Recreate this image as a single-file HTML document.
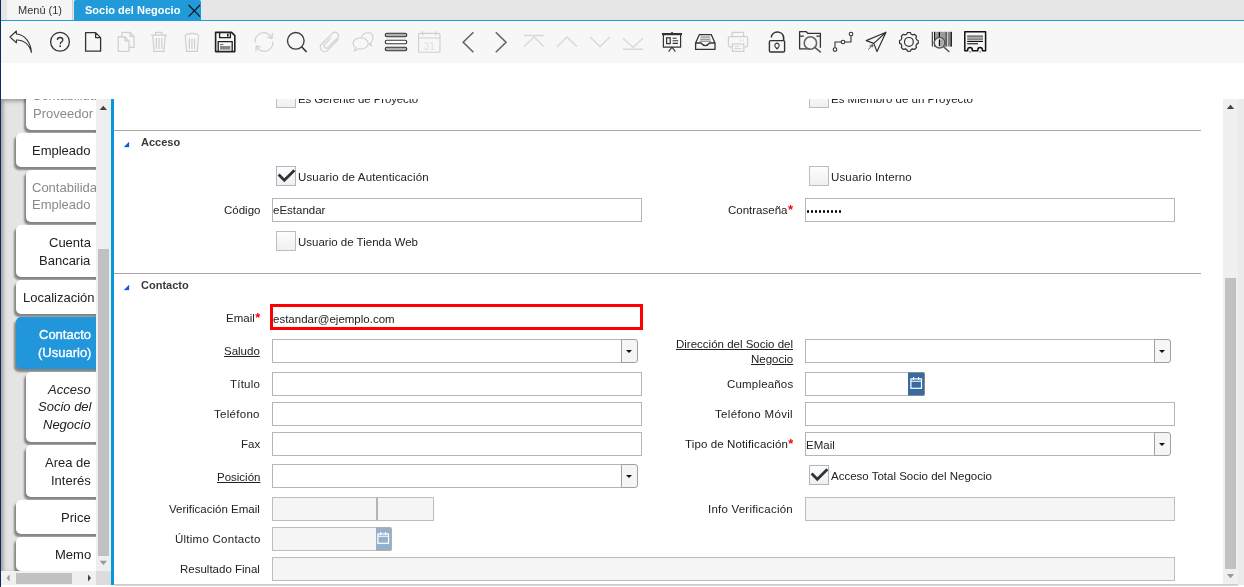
<!DOCTYPE html><html><head><meta charset="utf-8"><style>
*{margin:0;padding:0;box-sizing:border-box}
html,body{width:1244px;height:587px;overflow:hidden;background:#fff;font-family:"Liberation Sans", sans-serif;color:#333}
.a{position:absolute}
.t{position:absolute;will-change:transform;white-space:nowrap;font-size:11.5px;line-height:13px;color:#222}
.tr{text-align:right}
.u{text-decoration:underline}
.req{color:#f00;font-size:13px;line-height:0;position:relative;top:-0.5px;margin-left:0.5px;font-weight:bold}
.inp{position:absolute;border:1px solid #b5b5b5;background:#fff}
.dis{background:#f5f5f5;border-color:#bdbdbd}
.cb{position:absolute;width:20px;height:20px;border:1px solid #bdbdbd;background:linear-gradient(#fdfdfd,#f0f0f0);border-radius:0}
.cbc{border-color:#a9b7c6}
.tab{position:absolute;background:#fff;border-radius:5px 0 0 5px;box-shadow:-2px 3px 2px rgba(0,0,0,.42)}
.tt{position:absolute;will-change:transform;white-space:nowrap;font-size:13px;line-height:15px;color:#222}
</style></head><body>
<div class="a" style="left:0;top:0;width:1244px;height:20px;background:#e6e6e6"></div>
<div class="a" style="left:7px;top:0;width:66px;height:20px;background:#f5f5f5;border-right:1px solid #cfcfcf"></div>
<div class="a" style="left:74px;top:0;width:127px;height:21px;background:#219ad9;border-radius:2px 2px 0 0"></div>
<div class="a" style="left:0;top:20px;width:1244px;height:1px;background:#219ad9"></div>
<div class="t" style="left:18px;top:4px;font-size:11px;color:#333">Menú (1)</div>
<div class="t" style="left:85px;top:4px;font-size:11px;font-weight:bold;color:#fff">Socio del Negocio</div>
<div class="a" style="left:0;top:21px;width:1244px;height:42px;background:#f7f7f7"></div>
<div class="a" style="left:0;top:0;width:1px;height:587px;background:#0b2d5b"></div>
<div class="a" style="left:1px;top:99px;width:95px;height:472px;background:#e4e4e4;box-shadow:inset 2px 2px 4px rgba(0,0,0,.35);overflow:hidden">
<div class="tab" style="left:25px;top:-19px;width:120px;height:50px;background:#fff"></div>
<div class="tt" style="left:31px;top:-11px;color:#8a8a8a;">Contabilidad</div>
<div class="tt" style="left:31.5px;top:6.599999999999994px;color:#8a8a8a;">Proveedor</div>
<div class="tab" style="left:15px;top:34px;width:120px;height:34px;background:#fff"></div>
<div class="tt" style="right:5.5px;top:43.599999999999994px;color:#222;">Empleado</div>
<div class="tab" style="left:25px;top:71px;width:120px;height:52px;background:#fff"></div>
<div class="tt" style="left:31px;top:80.80000000000001px;color:#8a8a8a;">Contabilidad</div>
<div class="tt" style="left:31px;top:98.30000000000001px;color:#8a8a8a;">Empleado</div>
<div class="tab" style="left:15px;top:126px;width:120px;height:52px;background:#fff"></div>
<div class="tt" style="right:5.5px;top:135.7px;color:#222;">Cuenta</div>
<div class="tt" style="right:5.5px;top:153.5px;color:#222;">Bancaria</div>
<div class="tab" style="left:15px;top:181px;width:120px;height:34px;background:#fff"></div>
<div class="tt" style="left:21.7px;top:190.5px;color:#222;">Localización</div>
<div class="tab" style="left:15px;top:218px;width:120px;height:52px;background:#2196db"></div>
<div class="tt" style="right:5px;top:228.2px;color:#fff;-webkit-text-stroke:0.35px #fff;">Contacto</div>
<div class="tt" style="right:5px;top:246px;color:#fff;-webkit-text-stroke:0.35px #fff;">(Usuario)</div>
<div class="tab" style="left:25px;top:273px;width:120px;height:70px;background:#fff"></div>
<div class="tt" style="right:5px;top:282.7px;color:#222;font-style:italic;">Acceso</div>
<div class="tt" style="right:5px;top:300.3px;color:#222;font-style:italic;">Socio del</div>
<div class="tt" style="right:5px;top:318.1px;color:#222;font-style:italic;">Negocio</div>
<div class="tab" style="left:25px;top:346px;width:120px;height:52px;background:#fff"></div>
<div class="tt" style="right:5px;top:355.8px;color:#222;">Area de</div>
<div class="tt" style="right:5px;top:373.5px;color:#222;">Interés</div>
<div class="tab" style="left:15px;top:401px;width:120px;height:34px;background:#fff"></div>
<div class="tt" style="right:5px;top:411px;color:#222;">Price</div>
<div class="tab" style="left:15px;top:438px;width:120px;height:34px;background:#fff"></div>
<div class="tt" style="right:5px;top:448px;color:#222;">Memo</div>
</div>
<div class="a" style="left:96px;top:99px;width:15px;height:472px;background:#efefef"></div>
<div class="a" style="left:98px;top:249px;width:11px;height:307px;background:#c1c1c1"></div>
<div class="a" style="left:1px;top:571px;width:95px;height:14px;background:#f0f0f0"></div>
<div class="a" style="left:16px;top:573px;width:56px;height:11px;background:#c1c1c1"></div>
<div class="a" style="left:96px;top:571px;width:15px;height:14px;background:#dcdcdc"></div>
<div class="a" style="left:1px;top:585px;width:110px;height:2px;background:#fff"></div>
<div class="a" style="left:111px;top:99px;width:3px;height:486px;background:#0797dd"></div>
<div class="a" style="left:1223px;top:99px;width:21px;height:486px;background:#f0f0f0"></div>
<div class="a" style="left:1238px;top:99px;width:6px;height:486px;background:#ebebeb"></div>
<div class="a" style="left:1225px;top:278px;width:11px;height:291px;background:#c1c1c1"></div>
<div class="a" style="left:114px;top:584px;width:1124px;height:2px;background:linear-gradient(#c6c6c6,#dcdcdc)"></div>
<div class="a" style="left:114px;top:130px;width:1087px;height:1px;background:#a8a8a8"></div>
<div class="a" style="left:114px;top:273px;width:1087px;height:1px;background:#a8a8a8"></div>
<div class="t" style="left:141px;top:136px;font-size:11px;font-weight:bold;color:#3a3a3a">Acceso</div>
<div class="t" style="left:141px;top:279px;font-size:11px;font-weight:bold;color:#3a3a3a">Contacto</div>
<div class="cb" style="left:276px;top:88px"></div>
<div class="t" style="left:298.2px;top:93px;letter-spacing:-0.12px;">Es Gerente de Proyecto</div>
<div class="cb" style="left:809px;top:88px"></div>
<div class="t" style="left:831.2px;top:93px;">Es Miembro de un Proyecto</div>
<div class="cb cbc" style="left:276px;top:166px"></div>
<div class="t" style="left:298.2px;top:171px;letter-spacing:0.15px;">Usuario de Autenticación</div>
<div class="cb" style="left:809px;top:166px"></div>
<div class="t" style="left:831.2px;top:171px;letter-spacing:0.15px;">Usuario Interno</div>
<div class="t tr " style="right:984px;top:204px">Código</div>
<div class="inp " style="left:272px;top:198px;width:370px;height:24px"></div>
<div class="t" style="left:273px;top:204.4px;color:#222">eEstandar</div>
<div class="t tr " style="right:451px;top:204px">Contraseña<span class="req">*</span></div>
<div class="inp " style="left:805px;top:198px;width:370px;height:24px"></div>
<div class="a" style="left:807.00px;top:210px;width:2.2px;height:3px;border-radius:1px;background:#000"></div>
<div class="a" style="left:811.03px;top:210px;width:2.2px;height:3px;border-radius:1px;background:#000"></div>
<div class="a" style="left:815.06px;top:210px;width:2.2px;height:3px;border-radius:1px;background:#000"></div>
<div class="a" style="left:819.09px;top:210px;width:2.2px;height:3px;border-radius:1px;background:#000"></div>
<div class="a" style="left:823.12px;top:210px;width:2.2px;height:3px;border-radius:1px;background:#000"></div>
<div class="a" style="left:827.15px;top:210px;width:2.2px;height:3px;border-radius:1px;background:#000"></div>
<div class="a" style="left:831.18px;top:210px;width:2.2px;height:3px;border-radius:1px;background:#000"></div>
<div class="a" style="left:835.21px;top:210px;width:2.2px;height:3px;border-radius:1px;background:#000"></div>
<div class="a" style="left:839.24px;top:210px;width:2.2px;height:3px;border-radius:1px;background:#000"></div>
<div class="cb" style="left:276px;top:231px"></div>
<div class="t" style="left:298.2px;top:236px;">Usuario de Tienda Web</div>
<div class="t tr " style="right:983.5px;top:312px">Email<span class="req">*</span></div>
<div class="a" style="left:270px;top:304px;width:373px;height:26px;border:3px solid #f00;background:#fff"></div>
<div class="t" style="left:273.4px;top:313px;color:#222">estandar@ejemplo.com</div>
<div class="t tr u" style="right:984px;top:345px">Saludo</div>
<div class="inp" style="left:272px;top:339px;width:350px;height:24px;border-right:none"></div>
<div class="a" style="left:621px;top:339px;width:17px;height:24px;border:1px solid #a0a0a0;border-radius:0 3px 3px 0;background:#f5f5f5"></div>
<div class="a" style="left:626px;top:350px;width:0;height:0;border-left:3.5px solid transparent;border-right:3.5px solid transparent;border-top:3.5px solid #111"></div>
<div class="t tr u" style="right:451px;top:338px">Dirección del Socio del</div>
<div class="t tr u" style="right:451px;top:352.6px">Negocio</div>
<div class="inp" style="left:805px;top:339px;width:350px;height:24px;border-right:none"></div>
<div class="a" style="left:1154px;top:339px;width:17px;height:24px;border:1px solid #a0a0a0;border-radius:0 3px 3px 0;background:#f5f5f5"></div>
<div class="a" style="left:1159px;top:350px;width:0;height:0;border-left:3.5px solid transparent;border-right:3.5px solid transparent;border-top:3.5px solid #111"></div>
<div class="t tr " style="right:984px;top:378px"><span style="letter-spacing:0.23px;margin-right:-0.23px">Título</span></div>
<div class="inp " style="left:272px;top:372px;width:370px;height:24px"></div>
<div class="t tr " style="right:451px;top:378px"><span style="letter-spacing:0.18px;margin-right:-0.18px">Cumpleaños</span></div>
<div class="inp " style="left:805px;top:372px;width:105px;height:24px"></div>
<div class="a" style="left:908px;top:372px;width:17px;height:24px;background:#366aa0;border:1px solid #8a8a8a;border-left:none;border-radius:0 2px 2px 0"></div>
<div class="t tr " style="right:984px;top:408px"><span style="letter-spacing:0.29px;margin-right:-0.29px">Teléfono</span></div>
<div class="inp " style="left:272px;top:402px;width:370px;height:24px"></div>
<div class="t tr " style="right:451px;top:408px"><span style="letter-spacing:0.32px;margin-right:-0.32px">Teléfono Móvil</span></div>
<div class="inp " style="left:805px;top:402px;width:370px;height:24px"></div>
<div class="t tr " style="right:984px;top:438px">Fax</div>
<div class="inp " style="left:272px;top:432px;width:370px;height:24px"></div>
<div class="t tr " style="right:451px;top:438px"><span style="letter-spacing:0.12px;margin-right:-0.12px">Tipo de Notificación</span><span class="req">*</span></div>
<div class="inp" style="left:805px;top:432px;width:350px;height:24px;border-right:none"></div>
<div class="a" style="left:1154px;top:432px;width:17px;height:24px;border:1px solid #a0a0a0;border-radius:0 3px 3px 0;background:#f5f5f5"></div>
<div class="a" style="left:1159px;top:443px;width:0;height:0;border-left:3.5px solid transparent;border-right:3.5px solid transparent;border-top:3.5px solid #111"></div>
<div class="t" style="left:806px;top:439px;color:#222">EMail</div>
<div class="t tr u" style="right:984px;top:471px">Posición</div>
<div class="inp" style="left:272px;top:464px;width:350px;height:24px;border-right:none"></div>
<div class="a" style="left:621px;top:464px;width:17px;height:24px;border:1px solid #a0a0a0;border-radius:0 3px 3px 0;background:#f5f5f5"></div>
<div class="a" style="left:626px;top:475px;width:0;height:0;border-left:3.5px solid transparent;border-right:3.5px solid transparent;border-top:3.5px solid #111"></div>
<div class="cb cbc" style="left:809px;top:465px"></div>
<div class="t" style="left:831.2px;top:470px;">Acceso Total Socio del Negocio</div>
<div class="t tr " style="right:984px;top:503px">Verificación Email</div>
<div class="inp dis" style="left:272px;top:497px;width:106px;height:24px"></div>
<div class="inp dis" style="left:377px;top:497px;width:57px;height:24px"></div>
<div class="a" style="left:376px;top:498px;width:2px;height:22px;background:#b4b4b4"></div>
<div class="t tr " style="right:451px;top:503px"><span style="letter-spacing:0.22px;margin-right:-0.22px">Info Verificación</span></div>
<div class="inp dis" style="left:805px;top:497px;width:370px;height:24px"></div>
<div class="t tr " style="right:984px;top:533px"><span style="letter-spacing:0.25px;margin-right:-0.25px">Último Contacto</span></div>
<div class="inp dis" style="left:272px;top:527px;width:105px;height:24px"></div>
<div class="a" style="left:376px;top:527px;width:16px;height:24px;background:#96b0cb;border:1px solid #b0b0b0;border-left:none;border-radius:0 2px 2px 0"></div>
<div class="t tr " style="right:984px;top:563px">Resultado Final</div>
<div class="inp dis" style="left:272px;top:557px;width:903px;height:24px"></div>
<div class="a" style="left:1px;top:63px;width:1243px;height:36px;background:#fff"></div>
<svg class="a" style="left:0;top:0" width="1244" height="587" viewBox="0 0 1244 587"><path d="M16.4,31 L10,37 L16.4,42.8 L16.4,40 C23,39.5 29.5,44 31.4,52.5 C31,43 25,34.5 16.4,34 Z" fill="none" stroke="#333" stroke-width="1.1" stroke-linejoin="round"/><circle cx="60" cy="41.8" r="9.4" fill="none" stroke="#333" stroke-width="1.3"/><path d="M57.4,40 C57.4,38.3 58.6,37.5 60.1,37.5 C61.7,37.5 62.8,38.5 62.8,39.9 C62.8,41.7 60.2,42 60.2,44.2" fill="none" stroke="#333" stroke-width="1.3"/><rect x="59.4" y="45.4" width="1.6" height="1.6" fill="#333"/><path d="M85.6,32.6 L95.6,32.6 L100.6,37.6 L100.6,51.2 L85.6,51.2 Z M95.6,32.6 L95.6,37.6 L100.6,37.6" fill="none" stroke="#333" stroke-width="1.3" stroke-linejoin="round"/><path d="M118.2,36.8 L125,36.8 L129,40.8 L129,51.4 L118.2,51.4 Z M125,36.8 L125,40.8 L129,40.8 M122,36.8 L122,32.4 L130,32.4 L134,36.4 L134,47.4 L129,47.4 M130,32.4 L130,36.4 L134,36.4" fill="none" stroke="#cfcfcf" stroke-width="1.2" stroke-linejoin="round"/><path d="M151,35.2 L167,35.2 M155.6,35.2 L155.6,32.4 L162,32.4 L162,35.2 M152.8,35.2 L154,51.4 L164,51.4 L165.2,35.2 M156.3,38 L156.3,49 M159,38 L159,49 M161.8,38 L161.8,49" fill="none" stroke="#cfcfcf" stroke-width="1.2" stroke-linejoin="round"/><path d="M185.2,36 L186.6,51.4 L197.2,51.4 L198.6,36 Q197,32.4 194.5,34.2 Q192,32 189.5,34.2 Q186.8,32.4 185.2,36 Z M189.4,38.5 L189.4,49 M192,38.5 L192,49 M194.6,38.5 L194.6,49" fill="none" stroke="#cfcfcf" stroke-width="1.2" stroke-linejoin="round"/><path d="M215.6,32.4 L231.6,32.4 L234.8,35.6 L234.8,51.6 L215.6,51.6 Z" fill="none" stroke="#222" stroke-width="1.6" stroke-linejoin="round"/><path d="M219.6,32.4 L219.6,37.6 L230.4,37.6 L230.4,32.4" fill="none" stroke="#222" stroke-width="1.3"/><rect x="227" y="33.6" width="1.6" height="3" fill="#222"/><path d="M218.2,51.6 L218.2,41.6 L232.2,41.6 L232.2,51.6" fill="none" stroke="#222" stroke-width="1.3"/><rect x="220" y="44" width="3.4" height="1.1" fill="#777"/><rect x="220" y="46" width="10.4" height="3.6" fill="#888"/><path d="M255.2,42.4 A8.6,8.6 0 0 1 271.6,37.8 M272.8,41.6 A8.6,8.6 0 0 1 256.4,46.2" fill="none" stroke="#cfcfcf" stroke-width="1.2"/><path d="M272.4,33 L272,38.2 L267.2,37.2 M256,51.2 L256.2,46 L261,47" fill="none" stroke="#cfcfcf" stroke-width="1.2"/><circle cx="295.8" cy="40.8" r="8.3" fill="none" stroke="#3a3a3a" stroke-width="1.35"/><path d="M301.6,46.8 L306.6,52" stroke="#333" stroke-width="1.6"/><path d="M8.4,4.3 L-7.5,4.3 A4.3,4.3 0 0 1 -7.5,-4.3 L8,-4.3 A3.5,3.5 0 0 1 8,2.7 L-5,2.7 A2.4,2.4 0 0 1 -5,-2.1 L4,-2.1" fill="none" stroke="#cfcfcf" stroke-width="1.1" transform="translate(329.8,42) rotate(-45)"/><path d="M361.5,38 C362,34.8 364.8,32.8 368,32.8 C371.5,32.8 373,35.4 373,38 C373,40.6 371.8,42 370.4,43 L371.5,45.6 L368.6,43.8" fill="none" stroke="#cfcfcf" stroke-width="1.1"/><ellipse cx="360.6" cy="43.4" rx="7.6" ry="5.6" fill="#f7f7f7" stroke="#cfcfcf" stroke-width="1.1"/><path d="M355.4,47.4 L354.4,51 L358.6,48.8" fill="#f7f7f7" stroke="#cfcfcf" stroke-width="1.1"/><rect x="385.2" y="33.3" width="21.6" height="3.4" rx="1.7" fill="#b0b0b0" stroke="#333" stroke-width="1.1"/><rect x="385.2" y="40.3" width="21.6" height="3.4" rx="1.7" fill="#fff" stroke="#333" stroke-width="1.1"/><rect x="385.2" y="47.3" width="21.6" height="3.4" rx="1.7" fill="#b0b0b0" stroke="#333" stroke-width="1.1"/><rect x="418.6" y="33.4" width="21.4" height="18.8" rx="1" fill="none" stroke="#cfcfcf" stroke-width="1.1"/><path d="M418.6,38 L440,38 M422.6,31.2 L422.6,35.4 M435.8,31.2 L435.8,35.4" fill="none" stroke="#cfcfcf" stroke-width="1.1"/><text x="429.3" y="50" font-family="Liberation Sans" font-size="10" fill="#dedede" text-anchor="middle">31</text><path d="M473.4,32.2 L463.2,42.2 L473.4,52.2" fill="none" stroke="#666" stroke-width="1.6"/><path d="M495.8,32.2 L506,42.2 L495.8,52.2" fill="none" stroke="#666" stroke-width="1.6"/><path d="M524,35.5 L544,35.5 M524,46.8 L534,37 L544,46.8" fill="none" stroke="#d8d8d8" stroke-width="1.4"/><path d="M557,46.8 L567,37 L577,46.8" fill="none" stroke="#d8d8d8" stroke-width="1.4"/><path d="M590,37 L600,46.6 L610,37" fill="none" stroke="#d8d8d8" stroke-width="1.4"/><path d="M623,38.3 L633,47.3 L643,38.3 M623,49.3 L643,49.3" fill="none" stroke="#d8d8d8" stroke-width="1.4"/><rect x="662" y="33" width="20" height="2.2" fill="#333"/><rect x="671.2" y="31.9" width="1.6" height="1.4" fill="#333"/><path d="M663.4,35 L663.4,47.2 L680.6,47.2 L680.6,35" fill="none" stroke="#333" stroke-width="1.2"/><rect x="666.6" y="37.8" width="3.6" height="5.8" fill="none" stroke="#333" stroke-width="1.2"/><path d="M672.6,38.2 L676.6,38.2 M672.6,40.8 L678.2,40.8 M672.6,43.4 L678,43.4 M672,47.2 L668.6,51.6 M672,47.2 L675.4,51.6" fill="none" stroke="#333" stroke-width="1.1"/><path d="M695.6,43 L699.4,34.6 L711.2,34.6 L715,43 L715,49.4 L695.6,49.4 Z M695.6,43 L701,43 Q705.3,48.2 709.6,43 L715,43" fill="none" stroke="#333" stroke-width="1.3" stroke-linejoin="round"/><path d="M700.6,37 L710,37 M700.2,39.2 L710.4,39.2 M699.8,41.2 L711,41.2" fill="none" stroke="#666" stroke-width="0.9"/><path d="M732.2,36.6 L732.2,32.4 L743.6,32.4 L743.6,36.6 M732.4,46.8 L729.6,46.8 Q728.4,46.8 728.4,45.6 L728.4,38 Q728.4,36.6 729.8,36.6 L746.2,36.6 Q747.6,36.6 747.6,38 L747.6,45.6 Q747.6,46.8 746.4,46.8 L743.8,46.8" fill="none" stroke="#cfcfcf" stroke-width="1.2"/><rect x="732.4" y="44" width="11.4" height="7.4" fill="none" stroke="#cfcfcf" stroke-width="1.2"/><path d="M734.6,46.4 L739,46.4 M734.6,48.6 L741.4,48.6" stroke="#cfcfcf" stroke-width="0.9"/><rect x="739.6" y="39.6" width="1.2" height="1.2" fill="#cfcfcf"/><rect x="742.6" y="39.6" width="1.2" height="1.2" fill="#cfcfcf"/><rect x="769.4" y="40.6" width="15.2" height="11.4" rx="1.2" fill="none" stroke="#333" stroke-width="1.4"/><path d="M771.2,37.4 A6.3,6.3 0 0 1 783.6,37 L783.6,40.6" fill="none" stroke="#333" stroke-width="1.6"/><path d="M777,48.8 L775.3,46.9 A2.2,2.2 0 1 1 778.7,46.9 Z" fill="none" stroke="#333" stroke-width="1.1" stroke-linejoin="round"/><path d="M810,48.8 L799.6,48.8 L799.6,31.6 L806,31.6 L808,33.4 L820.4,33.4 L820.4,47.8 M799.6,36.2 L803.8,36.2 M816.4,36.2 L820.4,36.2" fill="none" stroke="#333" stroke-width="1.3" stroke-linejoin="round"/><circle cx="810.4" cy="43" r="6.2" fill="none" stroke="#666" stroke-width="1.6"/><path d="M814.8,47.4 L820.8,52.4" stroke="#555" stroke-width="1.4"/><circle cx="835" cy="49.6" r="1.8" fill="none" stroke="#333" stroke-width="1.1"/><circle cx="843" cy="42" r="1.8" fill="none" stroke="#333" stroke-width="1.1"/><circle cx="851" cy="34" r="1.8" fill="none" stroke="#333" stroke-width="1.1"/><path d="M835,47.8 L835,42 L841.2,42 M844.8,42 L851,42 L851,35.8" fill="none" stroke="#333" stroke-width="1.1"/><path d="M886,32.2 L866.2,40.6 L873.8,43.4 L877,51.6 Z M886,32.2 L873.8,43.4" fill="none" stroke="#333" stroke-width="1.2" stroke-linejoin="round"/><path d="M868.2,49.6 L873,44.8 M870.6,45.2 L873,44.8 L872.6,47.2 M869.4,46 L871.4,46" fill="none" stroke="#555" stroke-width="1"/><path d="M906.69,34.21 L907.43,32.62 A9.4,9.4 0 0 1 910.37,32.62 L911.11,34.21 A8,8 0 0 1 912.78,34.90 L914.43,34.30 A9.4,9.4 0 0 1 916.50,36.37 L915.90,38.02 A8,8 0 0 1 916.59,39.69 L918.18,40.43 A9.4,9.4 0 0 1 918.18,43.37 L916.59,44.11 A8,8 0 0 1 915.90,45.78 L916.50,47.43 A9.4,9.4 0 0 1 914.43,49.50 L912.78,48.90 A8,8 0 0 1 911.11,49.59 L910.37,51.18 A9.4,9.4 0 0 1 907.43,51.18 L906.69,49.59 A8,8 0 0 1 905.02,48.90 L903.37,49.50 A9.4,9.4 0 0 1 901.30,47.43 L901.90,45.78 A8,8 0 0 1 901.21,44.11 L899.62,43.37 A9.4,9.4 0 0 1 899.62,40.43 L901.21,39.69 A8,8 0 0 1 901.90,38.02 L901.30,36.37 A9.4,9.4 0 0 1 903.37,34.30 L905.02,34.90 A8,8 0 0 1 906.69,34.21 Z" fill="none" stroke="#333" stroke-width="1.2" stroke-linejoin="round"/><circle cx="908.9" cy="41.9" r="4.4" fill="none" stroke="#333" stroke-width="1.2"/><rect x="931.8" y="31.8" width="1.0" height="14.8" fill="#222"/><rect x="934" y="31.8" width="1.4" height="14.8" fill="#111"/><rect x="935.4" y="31.8" width="3.2" height="14.8" fill="#9a9a9a"/><rect x="938.6" y="31.8" width="1.4" height="14.8" fill="#111"/><rect x="940" y="31.8" width="5.6" height="14.8" fill="#9a9a9a"/><rect x="945.6" y="31.8" width="1.2" height="14.8" fill="#111"/><rect x="946.8" y="31.8" width="1.2" height="14.8" fill="#cfcfcf"/><rect x="948" y="31.8" width="2.2" height="14.8" fill="#888"/><rect x="950.4" y="31.8" width="1.5" height="14.8" fill="#111"/><circle cx="939.5" cy="42.8" r="5.3" fill="#f4f4f4" stroke="#555" stroke-width="1.5"/><rect x="938.8" y="39.4" width="1.6" height="6.8" fill="#111"/><path d="M940.4,39.2 A3.6,3.6 0 0 1 940.4,46.4 Z" fill="#aaa"/><path d="M943.6,46.9 L949.4,52" stroke="#555" stroke-width="1.4"/><path d="M964.8,50.8 L964.8,31.8 L985.6,31.8 L985.6,50.8 L982.4,50.8 L982.4,49.8 A2.3,2.3 0 0 0 977.8,49.8 L977.8,50.8 L972.3,50.8 L972.3,49.8 A2.3,2.3 0 0 0 967.7,49.8 L967.7,50.8 Z" fill="none" stroke="#111" stroke-width="1.5" stroke-linejoin="round"/><circle cx="970" cy="51.9" r="0.9" fill="#999"/><circle cx="980.1" cy="51.9" r="0.9" fill="#999"/><rect x="967.2" y="35.4" width="15.8" height="1.5" fill="#666"/><rect x="967.2" y="36.9" width="15.8" height="1.5" fill="#aaa"/><rect x="967.2" y="38.4" width="15.8" height="1.5" fill="#777"/><rect x="967.2" y="40.8" width="15.8" height="1.2" fill="#111"/><rect x="967.2" y="43" width="10.8" height="1.4" fill="#444"/><path d="M188.6,5 L200,16.6 M200,5 L188.6,16.6" stroke="#111" stroke-width="1.1"/><path d="M124,147 L129,147 L129,142 Z" fill="#0b5fd6" stroke="#0b5fd6" stroke-width="0.3" stroke-linejoin="round"/><path d="M124,290 L129,290 L129,285 Z" fill="#0b5fd6" stroke="#0b5fd6" stroke-width="0.3" stroke-linejoin="round"/><path d="M1226.8,109 L1234.2,109 L1230.5,104.8 Z" fill="#444"/><path d="M1226.8,574 L1234.2,574 L1230.5,578.2 Z" fill="#999"/><path d="M99.6,110 L107,110 L103.3,105.8 Z" fill="#444"/><path d="M99.6,560.8 L107,560.8 L103.3,565 Z" fill="#999"/><path d="M6.6,578 L9.6,574.6 L9.6,581.4 Z" fill="#999"/><path d="M91,578 L88,574.6 L88,581.4 Z" fill="#444"/><path d="M278.6,174.6 L284.3,180.2 L294.4,170.2" fill="none" stroke="#333" stroke-width="2.8"/><path d="M811.6,473.6 L817.3,479.2 L827.4,469.2" fill="none" stroke="#333" stroke-width="2.8"/><rect x="910.9" y="378.9" width="10.6" height="9.4" fill="none" stroke="#fff" stroke-width="1.2"/><path d="M910.9,381.2 L921.5,381.2 M913.6,377 L913.6,380 M918.6,377 L918.6,380" stroke="#fff" stroke-width="1.1"/><rect x="377.9" y="533.9" width="10.6" height="9.4" fill="none" stroke="#fff" stroke-width="1.2"/><path d="M377.9,536.2 L388.5,536.2 M380.6,532 L380.6,535 M385.6,532 L385.6,535" stroke="#fff" stroke-width="1.1"/></svg>
</body></html>
